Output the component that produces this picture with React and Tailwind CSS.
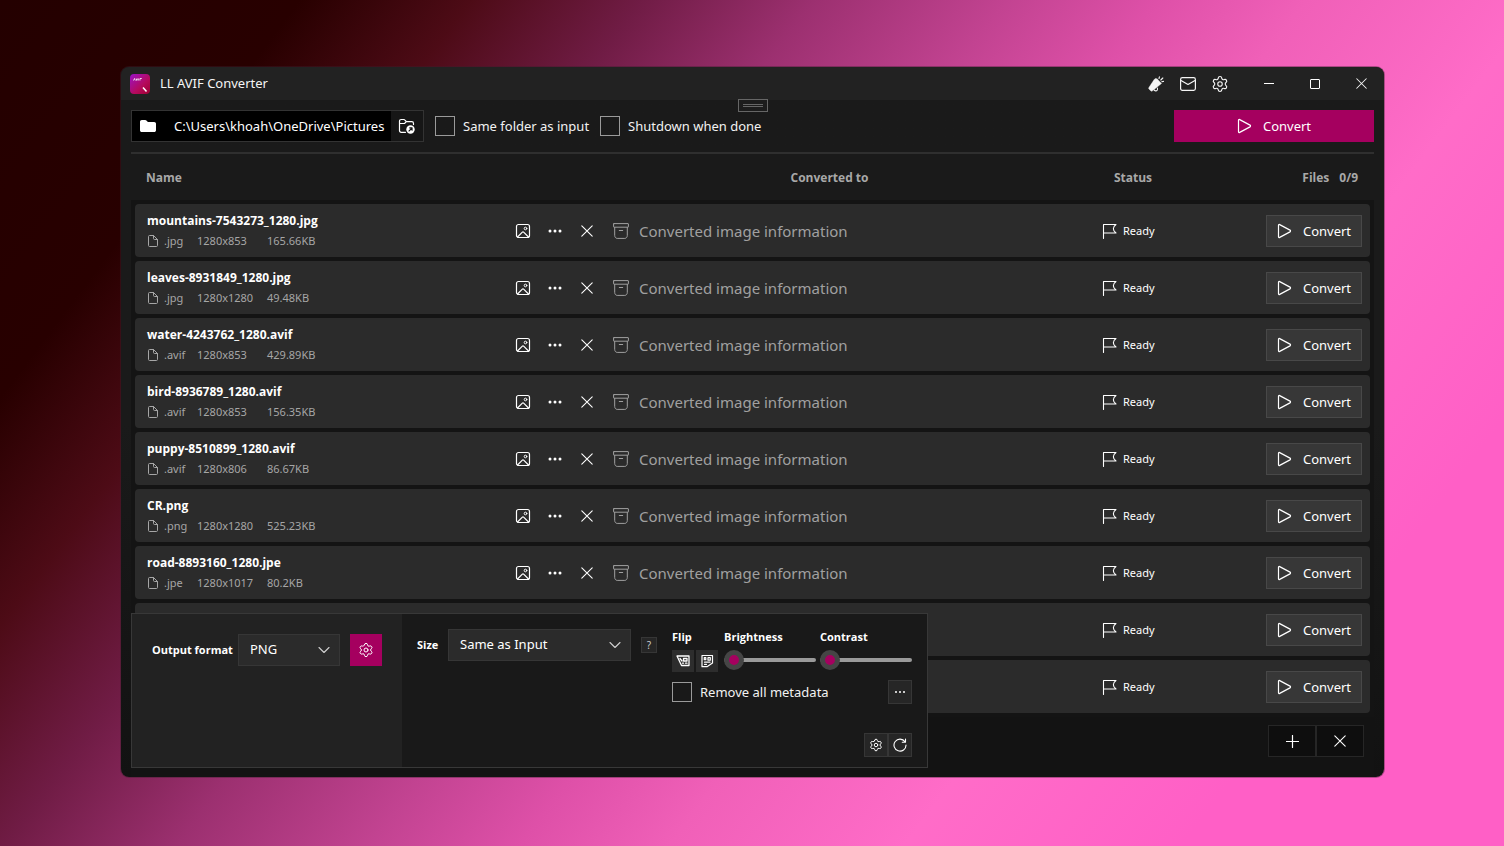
import { ChevronDown, Settings } from "lucide-react";

const files = [
  { name: "mountains-7543273_1280.jpg", ext: ".jpg", dims: "1280x853", size: "165.66KB" },
  { name: "leaves-8931849_1280.jpg", ext: ".jpg", dims: "1280x1280", size: "49.48KB" },
  { name: "water-4243762_1280.avif", ext: ".avif", dims: "1280x853", size: "429.89KB" },
  { name: "bird-8936789_1280.avif", ext: ".avif", dims: "1280x853", size: "156.35KB" },
  { name: "puppy-8510899_1280.avif", ext: ".avif", dims: "1280x806", size: "86.67KB" },
  { name: "CR.png", ext: ".png", dims: "1280x1280", size: "525.23KB" },
  { name: "road-8893160_1280.jpe", ext: ".jpe", dims: "1280x1017", size: "80.2KB" },
  { name: "" },
  { name: "" },
];

function Svg({ w = 16, h = 16, className = "", children }) {
  return (
    <svg
      width={w}
      height={h}
      viewBox={`0 0 ${w} ${h}`}
      fill="none"
      stroke="currentColor"
      strokeLinecap="round"
      strokeLinejoin="round"
      className={"shrink-0 " + className}
      aria-hidden="true"
    >
      {children}
    </svg>
  );
}

const PlayIcon = () => (
  <Svg>
    <path d="M1.500 2.300v11.400c0 .7.6 1 1.200.700l10.300-5.500c.7-.4.7-1.400 0-1.800L2.700 1.600C2.100 1.300 1.500 1.600 1.500 2.300Z" strokeWidth="1.2" />
  </Svg>
);

const CloseIcon = ({ size = 12 }) => (
  <svg width={size} height={size} viewBox="0 0 12 12" stroke="currentColor" strokeWidth="1.1" strokeLinecap="round" aria-hidden="true">
    <path d="M.8.8l10.400 10.400M11.200.8L.8 11.200" />
  </svg>
);

const DotsIcon = ({ r = 1.5, gap = 5 }) => (
  <Svg h={6}>
    <g fill="currentColor" stroke="none">
      <circle cx={8 - gap} cy="3" r={r} />
      <circle cx="8" cy="3" r={r} />
      <circle cx={8 + gap} cy="3" r={r} />
    </g>
  </Svg>
);

const AppLogo = () => (
  <svg width="20" height="20" viewBox="0 0 20 20" aria-hidden="true">
    <defs>
      <linearGradient id="logo" x1="0" y1="0" x2="1" y2="1">
        <stop offset="0" stopColor="#9a12c8" />
        <stop offset="0.6" stopColor="#b50a5c" />
        <stop offset="1" stopColor="#9c0030" />
      </linearGradient>
    </defs>
    <rect width="20" height="20" rx="4" fill="url(#logo)" />
    <path d="M3.500 6.500l1-2 .8 2M6.200 4.500l.6 2 .9-2M8.700 4.500v2M10 6.500v-2h1.800" fill="none" stroke="#fff" strokeWidth=".8" />
    <path d="M13 13.500l3.500 4" stroke="#fff" strokeWidth="1.500" />
  </svg>
);

const MegaphoneIcon = () => (
  <Svg>
    <path d="M9.500 3.200l4 4.300-9 7.300c-.6.5-1 .6-1.500.2L.9 13c-.4-.5-.3-1 0-1.500L6.200 3.500c.8-1.200 2.200-1.300 3.300-.3Z" fill="currentColor" strokeWidth=".4" />
    <path d="M6 13.800c.6 1.400 2.500 1.500 3.300.2.400-.7.300-1.400 0-2" strokeWidth="1.100" />
    <path d="M11 2.500l.4-1.700M12.800 4l2-2M13.800 5.800l1.700-.4" strokeWidth="1.100" />
  </Svg>
);

const MailIcon = () => (
  <Svg>
    <rect x=".6" y="1.600" width="14.800" height="12.800" rx="1.800" strokeWidth="1.200" />
    <path d="M1 4.500l7 4 7-4" strokeWidth="1.200" />
  </Svg>
);

const FolderOpenIcon = () => (
  <Svg w={18}>
    <path d="M7.500 14.300H3.200c-1 0-1.700-.7-1.700-1.700V3.200c0-1 .7-1.700 1.700-1.700h2.600c.5 0 .9.200 1.200.6l1.300 1.600h5.500c1 0 1.700.7 1.700 1.700v1.200M1.500 5.500h5l1.600-1.600" strokeWidth="1.200" />
    <circle cx="12.500" cy="11.500" r="4.200" fill="currentColor" stroke="none" />
    <path d="M11 13l3-3M11.700 9.900H14.100v2.400" stroke="#161616" strokeWidth="1.100" />
  </Svg>
);

const ImageIcon = () => (
  <Svg>
    <rect x="1.500" y="1.500" width="13" height="13" rx="2" strokeWidth="1.200" />
    <circle cx="10.500" cy="5.500" r="1.300" strokeWidth="1" />
    <path d="M2.500 14l4.600-4.700c.5-.5 1.300-.5 1.800 0l4.600 4.700" strokeWidth="1.200" />
  </Svg>
);

const ArchiveIcon = () => (
  <Svg className="text-[#a0a0a0]">
    <path d="M1 .6h14a.4.400 0 0 1 .4.400v2.800a.4.400 0 0 1-.4.400H1a.4.400 0 0 1-.4-.4V1A.4.400 0 0 1 1 .6Z" />
    <path d="M1.700 4.500v8c0 1.500 1 2.900 2.500 2.900h7.600c1.500 0 2.500-1.400 2.500-2.900v-8M6.300 7.500h3.400" />
  </Svg>
);

const DocIcon = () => (
  <Svg w={12} h={14}>
    <path d="M6.500 1.500h-4c-.6 0-1 .4-1 1v9c0 .6.4 1 1 1h7c.6 0 1-.4 1-1v-6l-4-4v3c0 .6.4 1 1 1h3" />
  </Svg>
);

const FlagIcon = () => (
  <Svg>
    <path d="M1.500 15.500V1.500h12.500c-3.500 2.500-3.500 6 0 8.500H1.500" strokeWidth="1.100" />
  </Svg>
);

function ConvertButton({ className }) {
  return (
    <button type="button" className={"inline-flex h-8 items-center justify-center gap-[10px] text-[13px] text-white " + className}>
      <PlayIcon />
      <span className="pt-0.5">Convert</span>
    </button>
  );
}

function Check({ label }) {
  return (
    <label className="flex items-center gap-2 text-[13px] leading-5 text-[#f2f2f2]">
      <input type="checkbox" className="size-5 shrink-0 appearance-none border border-[#9a9a9a] checked:bg-[#a5005f]" />
      {label}
    </label>
  );
}

const boldLabel = "font-['Open_Sans','Noto_Sans',sans-serif] text-[11px] font-bold whitespace-nowrap";

function Slider({ id, label }) {
  return (
    <div className="flex w-[92px] flex-col gap-[5px]">
      <label htmlFor={id} className={boldLabel + " leading-4"}>{label}</label>
      <input
        id={id}
        type="range"
        defaultValue="0"
        className="h-5 w-full appearance-none bg-transparent [&::-webkit-slider-runnable-track]:h-1 [&::-webkit-slider-runnable-track]:rounded-full [&::-webkit-slider-runnable-track]:bg-[#9a9a9a] [&::-webkit-slider-thumb]:-mt-2 [&::-webkit-slider-thumb]:size-5 [&::-webkit-slider-thumb]:appearance-none [&::-webkit-slider-thumb]:rounded-full [&::-webkit-slider-thumb]:border-[5px] [&::-webkit-slider-thumb]:border-[#454545] [&::-webkit-slider-thumb]:bg-[#a5005f]"
      />
    </div>
  );
}

function Dropdown({ id, value, className }) {
  return (
    <div className={"relative h-8 shrink-0 " + className}>
      <select id={id} className="size-full appearance-none border border-[#363636] bg-[#2b2b2b] pl-[11px] text-[13px] text-white">
        <option>{value}</option>
      </select>
      <ChevronDown size={20} strokeWidth={1.3} className="pointer-events-none absolute top-1.5 right-1.5 text-[#cfcfcf]" />
    </div>
  );
}

function FileRow({ file }) {
  const cell = "h-[53px] bg-[#2b2b2b] p-0";
  return (
    <tr>
      <td className={cell + " rounded-l pr-0.5 pl-3"}>
        {file.name && (
          <div className="flex items-center justify-between">
            <div>
              <div className="font-['Open_Sans','Noto_Sans',sans-serif] text-xs leading-5 font-bold text-white">{file.name}</div>
              <div className="flex items-center text-[11px] leading-5 text-[#a6a6a6]">
                <span className="w-[17px]"><DocIcon /></span>
                <span className="w-[33px]">{file.ext}</span>
                <span className="w-[70px]">{file.dims}</span>
                <span>{file.size}</span>
              </div>
            </div>
            <div className="flex text-white">
              <button type="button" aria-label="Preview" className="flex size-8 items-center justify-center"><ImageIcon /></button>
              <button type="button" aria-label="More" className="flex size-8 items-center justify-center"><DotsIcon /></button>
              <button type="button" aria-label="Remove" className="flex size-8 items-center justify-center"><CloseIcon /></button>
            </div>
          </div>
        )}
      </td>
      <td className={cell + " pl-2"}>
        {file.name && (
          <div className="flex items-center gap-[10px] text-[15px] text-[#a0a0a0]">
            <ArchiveIcon />
            <span className="pt-0.5">Converted image information</span>
          </div>
        )}
      </td>
      <td className={cell}>
        <div className="flex items-center gap-[5px] pl-12 text-[11px] text-white">
          <FlagIcon />
          <span className="pt-0.5">Ready</span>
        </div>
      </td>
      <td className={cell + " rounded-r pr-2 text-right"}>
        <ConvertButton className="w-24 border border-[#484848] bg-[#373737] align-middle" />
      </td>
    </tr>
  );
}

function OptionsPanel() {
  const small = "flex size-6 items-center justify-center border border-[#363636] bg-[#262626]";
  return (
    <section className="absolute bottom-[9px] left-[10px] flex h-[155px] w-[797px] border border-[#383838] bg-[#191919] text-white">
      <div className="flex w-[270px] items-start gap-[10px] bg-[#222] py-5 pl-5">
        <label htmlFor="format" className={boldLabel + " w-[76px] leading-8"}>Output format</label>
        <Dropdown id="format" value="PNG" className="w-[102px]" />
        <button type="button" aria-label="Format settings" className="flex size-8 items-center justify-center bg-[#a5005f]">
          <Settings size={16} strokeWidth={1.5} />
        </button>
      </div>

      <div className="flex flex-1 items-start p-[15px]">
        <label htmlFor="size" className={boldLabel + " w-[31px] leading-8"}>Size</label>
        <Dropdown id="size" value="Same as Input" className="w-[183px]" />
        <button type="button" aria-label="Size help" className="mt-2 ml-[10px] size-4 border border-[#363636] bg-[#262626] text-[10px] leading-3 text-[#ccc]">?</button>

        <div className="ml-[15px] flex h-full flex-1 flex-col">
          <div className="flex">
            <div className="flex w-[52px] flex-col gap-[5px]">
              <span className={boldLabel + " leading-4"}>Flip</span>
              <div className="flex gap-[2px]">
                <button type="button" aria-label="Flip horizontally" className="flex size-[22px] items-center justify-center bg-[#2d2d2d]">
                  <Svg w={14} h={14}>
                    <path d="M1 2h12v9.500H5.500L1 2ZM4 4.500l2 2.500M7.500 4.500h3.500v2.500H7.500zM6.500 9.200h1M9.500 9.200h1.500" strokeWidth="1.300" />
                  </Svg>
                </button>
                <button type="button" aria-label="Flip vertically" className="flex size-[22px] items-center justify-center bg-[#2d2d2d]">
                  <Svg w={14} h={14}>
                    <path d="M2 1.500h10.500v7.500L7 12.700H2V1.500ZM4.300 3.700h1.500v2H4.300zM8 3.700h2.300v2.500H8zM4.500 8.200h5.500M4.500 10.300h2" strokeWidth="1.200" />
                  </Svg>
                </button>
              </div>
            </div>
            <div className="flex gap-1">
              <Slider id="brightness" label="Brightness" />
              <Slider id="contrast" label="Contrast" />
            </div>
          </div>
          <div className="mt-2 flex items-center justify-between">
            <Check label="Remove all metadata" />
            <button type="button" aria-label="Metadata options" className={small}><DotsIcon r={1} gap={4} /></button>
          </div>
          <div className="mt-auto -mb-[5px] flex justify-end">
            <button type="button" aria-label="Settings" className={small}><Settings size={14} strokeWidth={1.7} /></button>
            <button type="button" aria-label="Reset" className={small}>
              <Svg w={14} h={14}>
                <path d="M12 3.800A6 6 0 1 0 13 7M12.500 1v3.200H9.300" strokeWidth="1.100" />
              </Svg>
            </button>
          </div>
        </div>
      </div>
    </section>
  );
}

function App() {
  return (
    <div className="min-h-screen bg-[linear-gradient(127deg,#240000_0%,#280000_14%,#4d0b16_22%,#701c45_30%,#9c3070_38%,#c24391_47%,#de50a8_54%,#f060b8_61%,#ff6cc8_72%,#ff5fc6_85%)] pt-[67px] pr-[120px] pb-[69px] pl-[121px] font-['Noto_Sans','Open_Sans',sans-serif]">
      <main className="relative flex min-h-[710px] flex-col overflow-hidden rounded-lg bg-linear-to-b from-[#1a1a1a] via-[#1a1a1a] to-[#121212] shadow-[0_0_0_1px_rgba(60,30,45,0.4)]">

        {/* Title bar */}
        <header className="flex h-[33px] items-center bg-[#222] pl-[9px] text-[#f5f5f5]">
          <AppLogo />
          <h1 className="ml-[10px] flex-1 text-[13px]">LL AVIF Converter</h1>
          <button type="button" aria-label="News" className="flex size-8 items-center justify-center"><MegaphoneIcon /></button>
          <button type="button" aria-label="Mail" className="flex size-8 items-center justify-center"><MailIcon /></button>
          <button type="button" aria-label="Settings" className="mr-[10px] flex size-8 items-center justify-center"><Settings size={18} strokeWidth={1.5} /></button>
          <button type="button" aria-label="Minimize" className="flex h-8 w-[46px] items-center justify-center"><span className="h-px w-[10px] bg-white" /></button>
          <button type="button" aria-label="Maximize" className="flex h-8 w-[46px] items-center justify-center"><span className="size-[10px] rounded-[1px] border border-white" /></button>
          <button type="button" aria-label="Close" className="flex h-8 w-[46px] items-center justify-center"><CloseIcon size={11} /></button>
        </header>

        {/* Grip that hangs from the title bar */}
        <div className="absolute top-8 left-1/2 flex h-[13px] w-[30px] -translate-x-1/2 flex-col items-center justify-center gap-px border border-[#666] bg-[#1c1c1c]">
          <span className="h-px w-5 bg-[#666]" />
          <span className="h-px w-5 bg-[#666]" />
        </div>

        {/* Toolbar */}
        <div className="mx-[10px] flex items-center gap-[11px] border-b-2 border-[#2f2f2f] py-[10px]">
          <div className="flex h-8 w-[293px] items-center border border-[#333] bg-black text-white">
            <svg width="32" height="16" viewBox="0 0 32 16" fill="currentColor" aria-hidden="true">
              <path d="M8 3.800C8 2.800 8.800 2 9.800 2h3.400c.5 0 .9.200 1.200.5L15.900 4h6.300c1 0 1.800.8 1.800 1.800v6.400c0 1-.8 1.800-1.800 1.800H9.800c-1 0-1.800-.8-1.800-1.800V3.800Z" />
            </svg>
            <input aria-label="Output folder" defaultValue="C:\Users\khoah\OneDrive\Pictures" className="h-full min-w-0 flex-1 bg-transparent pl-[10px] text-[13px] outline-none" />
            <button type="button" aria-label="Open folder" className="flex h-full w-8 items-center justify-center bg-[#161616]"><FolderOpenIcon /></button>
          </div>
          <Check label="Same folder as input" />
          <Check label="Shutdown when done" />
          <ConvertButton className="ml-auto w-[200px] bg-[#a5005f]" />
        </div>

        {/* File list */}
        <div className="mx-[10px] bg-[linear-gradient(to_bottom,#1a1a1a_46px,#141414_46px)] px-1">
          <table className="w-full table-fixed border-separate border-spacing-x-0 border-spacing-y-1">
            <thead className="font-['Open_Sans','Noto_Sans',sans-serif] text-xs text-[#a8a8a8]">
              <tr>
                <th className="h-[42px] p-0 pb-0.5 pl-[11px] text-left">Name</th>
                <th className="w-[449px] p-0 pb-0.5">Converted to</th>
                <th className="w-[158px] p-0 pb-0.5">Status</th>
                <th className="w-[158px] p-0 pr-3 pb-0.5 text-right">
                  Files<span className="ml-[10px]">0/9</span>
                </th>
              </tr>
            </thead>
            <tbody>
              {files.map((file, i) => (
                <FileRow key={i} file={file} />
              ))}
            </tbody>
          </table>
        </div>

        <div className="mx-[10px] flex flex-1 items-start justify-end bg-[#131313] pt-2 pr-[10px] text-white">
          <button type="button" aria-label="Add files" className="flex h-8 w-12 items-center justify-center border border-[#262626] bg-[#0e0e0e]">
            <Svg w={13} h={13}><path d="M6.500.5v12M.5 6.500h12" strokeWidth="1.200" /></Svg>
          </button>
          <button type="button" aria-label="Clear list" className="flex h-8 w-12 items-center justify-center border border-[#262626] bg-[#0e0e0e]">
            <CloseIcon />
          </button>
        </div>

        <OptionsPanel />
      </main>
    </div>
  );
}

export default App;
